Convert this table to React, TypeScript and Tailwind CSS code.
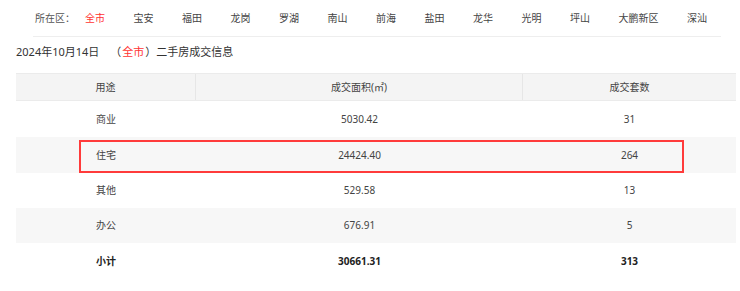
import React from "react";

const districts = ["全市", "宝安", "福田", "龙岗", "罗湖", "南山", "前海", "盐田", "龙华", "光明", "坪山", "大鹏新区", "深汕"];

const rows = [
  { use: "商业", area: "5030.42", count: "31", gray: false, h: "h-[36px]" },
  { use: "住宅", area: "24424.40", count: "264", gray: true, h: "h-[36px]" },
  { use: "其他", area: "529.58", count: "13", gray: false, h: "h-[35px]" },
  { use: "办公", area: "676.91", count: "5", gray: true, h: "h-[35px]" },
];

export default function App() {
  return (
    <div
      className="w-[740px] h-[291px] bg-white text-[#333] overflow-hidden"
      style={{ fontFamily: '"Noto Sans", "Noto Sans CJK SC", sans-serif' }}
    >
      <div className="ml-[33px] w-[688px] h-[37px] border-b border-[#eeeeee] flex items-center text-[10px]">
        <span className="ml-[2px] text-[#555]">所在区：</span>
        <div className="flex gap-[28.5px] ml-[10px]">
          {districts.map((d, i) => (
            <span key={d} className={i === 0 ? "text-[#ff3333]" : "text-[#444]"}>
              {d}
            </span>
          ))}
        </div>
      </div>
      <div className="h-[30px] pl-[16px] flex items-center text-[11px] text-[#333]">
        <span>2024年10月14日</span>
        <span className="ml-[11px]">（</span>
        <span className="text-[#ff3333] ml-[1px]">全市</span>
        <span className="ml-[1px]">）二手房成交信息</span>
      </div>
      <div className="relative ml-[16px] mt-[6px] w-[720px] text-[10px] text-[#444]">
        <div className="flex h-[28px] bg-[#f4f4f4] border-y border-[#ebebeb]">
          <div className="w-[180px] flex items-center justify-center border-r border-[#e6e6e6]">用途</div>
          <div className="w-[327px] flex items-center justify-center border-r border-[#e6e6e6]">成交面积(㎡)</div>
          <div className="w-[213px] flex items-center justify-center">成交套数</div>
        </div>
        {rows.map((r) => (
          <div key={r.use} className={`flex ${r.h} ${r.gray ? "bg-[#f7f7f7]" : "bg-white"}`}>
            <div className="w-[180px] flex items-center justify-center">{r.use}</div>
            <div className="w-[327px] flex items-center justify-center">{r.area}</div>
            <div className="w-[213px] flex items-center justify-center">{r.count}</div>
          </div>
        ))}
        <div className="flex h-[36px] bg-white font-bold text-[#222]">
          <div className="w-[180px] flex items-center justify-center">小计</div>
          <div className="w-[327px] flex items-center justify-center">30661.31</div>
          <div className="w-[213px] flex items-center justify-center">313</div>
        </div>
        <div className="absolute left-[63px] top-[67px] w-[605px] h-[33px] border-2 border-[#ff3b3b]" />
      </div>
    </div>
  );
}
